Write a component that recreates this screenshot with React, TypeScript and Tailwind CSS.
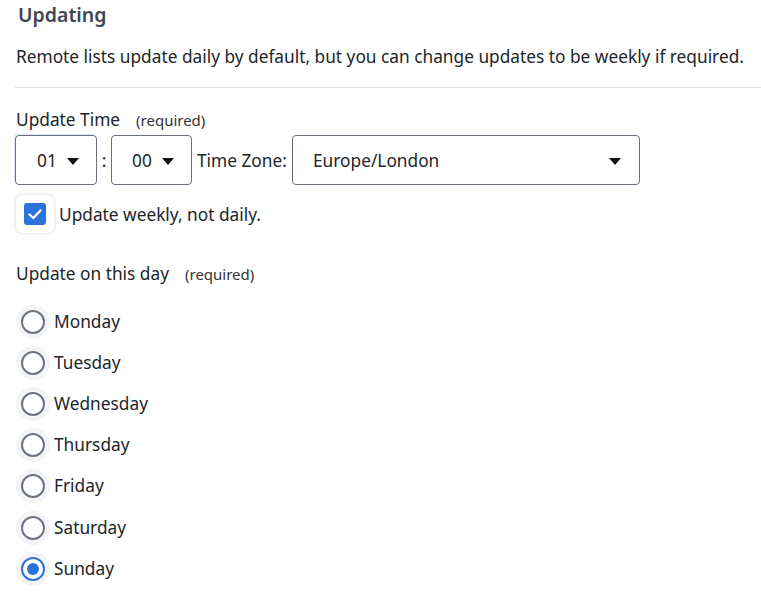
import React from "react";

const Caret = () => (
  <svg width="12" height="7" viewBox="0 0 12 7" className="shrink-0">
    <path d="M0 0 L12 0 L6 7 Z" fill="#111" />
  </svg>
);

const days = ["Monday", "Tuesday", "Wednesday", "Thursday", "Friday", "Saturday", "Sunday"];

export default function App() {
  return (
    <div
      className="w-[761px] h-[612px] bg-white text-[#212529] overflow-hidden"
      style={{ fontFamily: '"Noto Sans", "Open Sans", sans-serif' }}
    >
      <div className="pl-4 flex flex-col">
        <div className="mt-[3px] pl-[2px] text-[19.5px] leading-6 font-semibold text-[#3f4650]">Updating</div>
        <div className="mt-[18px] text-[17.3px] leading-6 whitespace-nowrap">
          Remote lists update daily by default, but you can change updates to be weekly if required.
        </div>
        <div className="mt-[18px] h-px bg-[#e2e2e2] -ml-px"></div>

        <div className="mt-[20px] flex items-center leading-6">
          <span className="text-[17.3px]">Update Time</span>
          <span className="ml-[16px] text-[15px] text-[#333]">(required)</span>
        </div>

        <div className="mt-[3px] flex items-center -ml-px text-[17.3px]">
          <div className="h-[50px] w-[82px] border border-[#68717d] rounded-[4px] flex items-center pt-[2px] pl-[21px] gap-[10px] shadow-[-1px_-1px_0_0_#dbe6fb]">
            <span>01</span>
            <Caret />
          </div>
          <span className="w-[14px] text-center pt-[2px]">:</span>
          <div className="h-[50px] w-[81px] border border-[#68717d] rounded-[4px] flex items-center pt-[2px] pl-[20px] gap-[10px]">
            <span>00</span>
            <Caret />
          </div>
          <span className="ml-[5px] w-[95px] whitespace-nowrap pt-[2px]">Time Zone:</span>
          <div className="h-[50px] w-[348px] border border-[#68717d] rounded-[4px] flex items-center pt-[2px] pl-[20px] pr-[18px] justify-between">
            <span>Europe/London</span>
            <Caret />
          </div>
        </div>

        <div className="mt-[9px] flex items-center -ml-px">
          <div className="w-10 h-10 rounded-lg bg-white shadow-[0_0_2px_1px_rgba(0,0,0,0.06)] border border-[#f0f0f0] flex items-center justify-center">
            <div className="w-[22px] h-[22px] rounded-[3px] bg-[#2b73d9] flex items-center justify-center">
              <svg width="16" height="16" viewBox="0 0 16 16">
                <path d="M2.5 8.5 L6.2 12 L13.5 4.5" stroke="white" strokeWidth="2.4" fill="none" strokeLinecap="round" strokeLinejoin="round" />
              </svg>
            </div>
          </div>
          <span className="ml-[4px] pt-[2px] text-[17.3px] leading-6">Update weekly, not daily.</span>
        </div>

        <div className="mt-[28px] flex items-center leading-6">
          <span className="text-[17.3px]">Update on this day</span>
          <span className="ml-4 text-[15px] text-[#333]">(required)</span>
        </div>

        <div className="mt-[15px] flex flex-col">
          {days.map((d) => {
            const sel = d === "Sunday";
            return (
              <div key={d} className="h-[41.2px] flex items-center">
                <div className="w-[34px] h-[34px] rounded-full bg-[#f4f4f4] flex items-center justify-center">
                  <div
                    className={
                      sel
                        ? "w-[24px] h-[24px] rounded-full border-[2.5px] border-[#2b73d9] bg-white flex items-center justify-center"
                        : "w-[24px] h-[24px] rounded-full border-[2.5px] border-[#6b7482] bg-white"
                    }
                  >
                    {sel && <div className="w-[12px] h-[12px] rounded-full bg-[#2b73d9]"></div>}
                  </div>
                </div>
                <span className="ml-[4px] text-[17.3px] leading-6">{d}</span>
              </div>
            );
          })}
        </div>
      </div>
    </div>
  );
}
